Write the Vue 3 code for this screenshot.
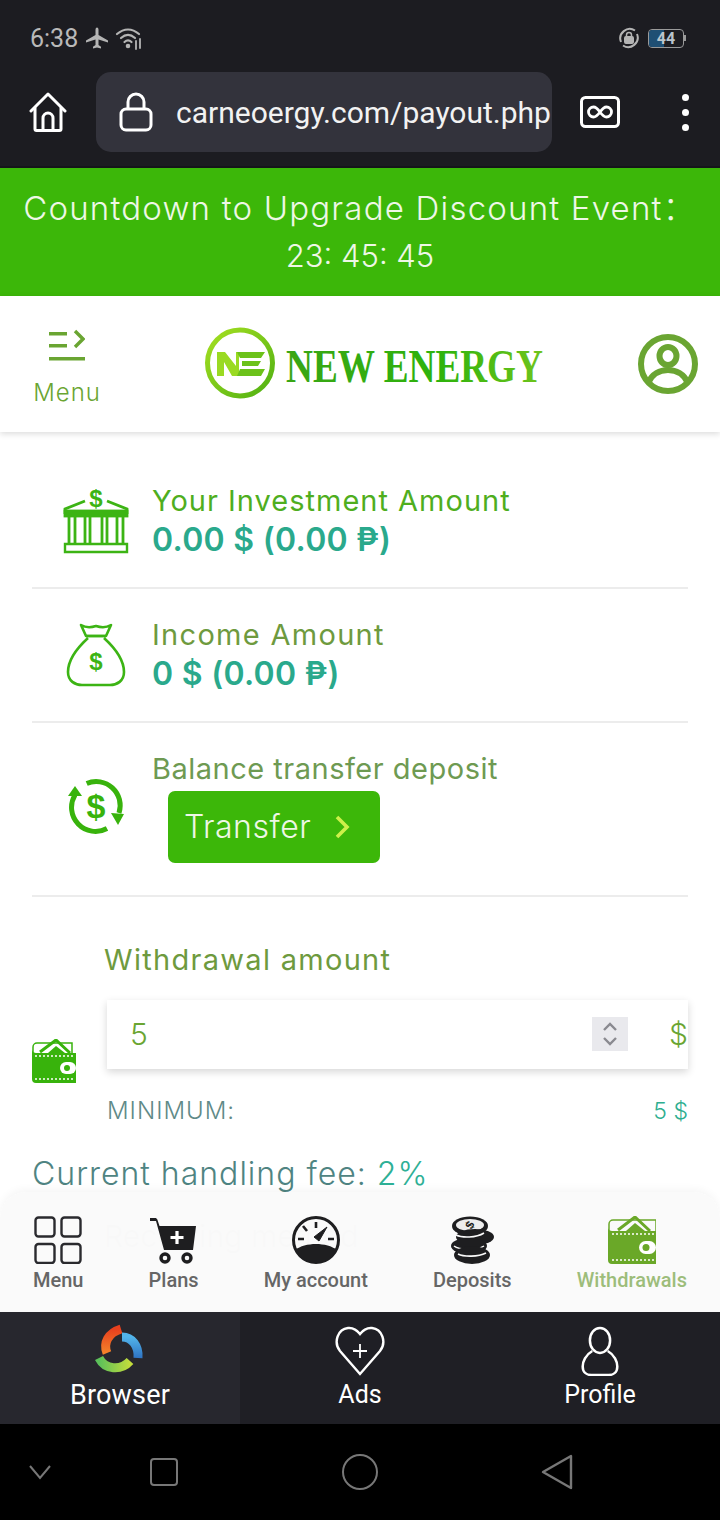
<script setup>
import { ref } from "vue"

const amount = ref(5)
const countdown = "23: 45: 45"
const url = "carneoergy.com/payout.php"
</script>

<template>
  <div class="phone">
    <div class="status-bar">
      <span class="clock">6:38</span>
      <svg class="st-plane" viewBox="0 0 24 24" width="24" height="24"><path d="M12 1.500c-1 0-1.500 1.200-1.500 2.500v5L1 14.500v2l9.500-3v5.500L8 20.800v1.700l4-1 4 1v-1.700l-2.500-1.800v-5.500l9.500 3v-2L13.500 9V4c0-1.300-.5-2.500-1.500-2.500z" fill="#b4b4b4"/></svg>
      <svg class="st-wifi" viewBox="0 0 30 24" width="30" height="24" fill="none" stroke="#b4b4b4" stroke-width="2.200" stroke-linecap="round"><path d="M2 8c7-6 15-6 22 0"/><path d="M6 12c4.500-4 9.500-4 14 0"/><path d="M9.500 16c2.500-2.200 4.500-2.200 7 0"/><circle cx="13" cy="20" r="1.200" fill="#b4b4b4"/><path d="M21 15v8M25 13v9" stroke-width="1.800"/></svg>
      <span class="st-fill"></span>
      <svg class="st-rotate" viewBox="0 0 24 24" width="24" height="24" fill="none" stroke="#b4b4b4" stroke-width="2"><path d="M4 16a9.500 9.500 0 0 1 14-11.500M20 8a9.500 9.500 0 0 1-14 11.500"/><rect x="8" y="11" width="8" height="6" rx="1" fill="#b4b4b4"/><path d="M9.500 11V9a2.500 2.500 0 0 1 5 0v2" stroke-width="1.500"/></svg>
      <span class="battery"><i class="battery-fill"></i><b>44</b></span>
      <span class="battery-tip"></span>
    </div>

    <div class="browser-bar">
      <svg class="home-icon" viewBox="0 0 38 40" width="38" height="40" fill="none" stroke="#fff" stroke-width="3" stroke-linejoin="round" stroke-linecap="round"><path d="M2 19L19 2l17 17"/><path d="M6 16v21a1.500 1.500 0 0 0 1.500 1.500h23A1.500 1.500 0 0 0 32 37V16"/><path d="M14 38V26a5 5 0 0 1 10 0v12"/></svg>
      <div class="url-box">
        <svg class="lock-icon" viewBox="0 0 34 40" width="34" height="40" fill="none" stroke="#fff" stroke-width="3"><rect x="2" y="17" width="30" height="21" rx="5"/><path d="M9 17V10a8 8 0 0 1 16 0v7"/></svg>
        <span class="url-text">{{ url }}</span>
      </div>
      <svg class="infinity-icon" viewBox="0 0 40 32" width="40" height="32" fill="none" stroke="#fff"><rect x="1.500" y="1.500" width="37" height="29" rx="4" stroke-width="3"/><path d="M20 16c-2.500-3.500-4.500-5-6.500-5a5 5 0 0 0 0 10c2 0 4-1.500 6.500-5s4.500-5 6.500-5a5 5 0 0 1 0 10c-2 0-4-1.500-6.500-5z" stroke-width="2.800"/></svg>
      <div class="dots"><i></i><i></i><i></i></div>
    </div>

    <div class="page-area">
      <div class="countdown">
        <div>Countdown to Upgrade Discount Event：</div>
        <div class="countdown-time">{{ countdown }}</div>
      </div>

      <header class="site-header">
        <div class="menu-btn">
          <svg viewBox="0 0 36 32" width="36" height="32" fill="#6aa532"><rect x="0" y="3" width="18" height="3.500"/><rect x="0" y="15" width="18" height="3.500"/><rect x="0" y="28" width="36" height="3.500"/><path d="M26 2l8 8-8 8" fill="none" stroke="#6aa532" stroke-width="3.400"/></svg>
          <span>Menu</span>
        </div>
        <svg class="logo" viewBox="0 0 340 76" width="340" height="76">
          <defs>
            <linearGradient id="ring" x1="0" y1="0" x2="1" y2="1"><stop offset="0" stop-color="#a6e021"/><stop offset="1" stop-color="#4fb012"/></linearGradient>
            <linearGradient id="word" x1="0" y1="0" x2="1" y2="0"><stop offset="0" stop-color="#39a515"/><stop offset=".6" stop-color="#2eb30c"/><stop offset="1" stop-color="#6fc41c"/></linearGradient>
          </defs>
          <ellipse cx="35" cy="37" rx="32.500" ry="33" fill="none" stroke="url(#ring)" stroke-width="5"/>
          <path d="M12 50V26h8l11 14V26h3v24h-7L19 36v14z" fill="#9ada22"/>
          <path d="M32 26h28l-4 6H35zM37 35h19l-3 5H37zM35 43h25l-4 7H32z" fill="#6cc21a"/>
          <text class="logo-text" x="81" y="56" textLength="257" lengthAdjust="spacingAndGlyphs" fill="url(#word)">NEW ENERGY</text>
        </svg>
        <svg class="user-icon" viewBox="0 0 60 60" width="60" height="60" fill="none" stroke="#6aa532" stroke-width="6"><circle cx="30" cy="30" r="27"/><ellipse cx="30" cy="22" rx="8.500" ry="9"/><path d="M10 49c4-9 12-13 20-13s16 4 20 13"/></svg>
      </header>

      <main class="content">
        <section class="row">
          <div class="row-icon">
            <svg class="bank-icon" viewBox="0 0 64 66" width="64" height="66" fill="none" stroke="#3cb414" stroke-width="2.800">
              <path d="M1 26v-5l20-8M63 26v-5l-20-8"/>
              <rect x="1" y="23" width="62" height="5" fill="#3cb414"/>
              <path d="M5 28v27M11 28v27M21 28v27M26 28v27M38 28v27M43 28v27M53 28v27M59 28v27"/>
              <path d="M1 56h62v8H1z" stroke-width="2.400"/>
              <text class="bank-dollar" x="32" y="19" text-anchor="middle" fill="#3cb414" stroke="none">$</text>
            </svg>
          </div>
          <div class="row-text">
            <div class="label label-bright">Your Investment Amount</div>
            <div class="value">0.00 $ (0.00 ₱)</div>
          </div>
        </section>

        <section class="row">
          <div class="row-icon">
            <svg viewBox="0 0 60 66" width="60" height="66" fill="none" stroke="#3cb414" stroke-width="2.600" stroke-linejoin="round">
              <path d="M15 3c5 3 9 3 15 1 6 2 10 2 15-1l-5 11H20z"/>
              <path d="M20 14h20M22 16C10 27 2 38 2 50c0 9 7 13 14 13h28c7 0 14-4 14-13 0-12-8-23-20-34"/>
              <text class="bag-dollar" x="30" y="48" text-anchor="middle" fill="#3cb414" stroke="none">$</text>
            </svg>
          </div>
          <div class="row-text">
            <div class="label label-wide">Income Amount</div>
            <div class="value">0 $ (0.00 ₱)</div>
          </div>
        </section>

        <section class="row row-transfer">
          <div class="row-icon">
            <svg viewBox="0 0 56 56" width="56" height="56" fill="none" stroke="#38b30c" stroke-width="5">
              <path d="M18.700 5.500A24 24 0 0 1 51 35"/>
              <path d="M39 50.500A24 24 0 0 1 7 17"/>
              <path d="M7 8l7 10H0z" fill="#38b30c" stroke="none"/>
              <path d="M50 47l-7-12 13 1z" fill="#38b30c" stroke="none"/>
              <text class="transfer-dollar" x="28" y="40" text-anchor="middle" fill="#38b30c" stroke="none">$</text>
            </svg>
          </div>
          <div class="row-text">
            <div class="label label-dim">Balance transfer deposit</div>
            <button class="transfer-btn">
              Transfer
              <svg viewBox="0 0 16 24" width="16" height="24" fill="none" stroke="#cdf04a" stroke-width="3.600"><path d="M3 2l10 10L3 22"/></svg>
            </button>
          </div>
        </section>

        <section class="withdraw">
          <div class="label label-wide withdraw-title">Withdrawal amount</div>
          <div class="withdraw-line">
            <svg class="wallet-small" viewBox="0 0 44 44" width="44" height="44">
              <path d="M1 8a4 4 0 0 1 4-4h35v12H1z" fill="#fff" stroke="#38b30c" stroke-width="1.500"/>
              <path d="M8 13L24 1l14 13" fill="none" stroke="#38b30c" stroke-width="3"/>
              <path d="M16 14L24 7l9 7z" fill="#38b30c"/>
              <path d="M0 10c0 3 2 4 5 4h39v30H4a4 4 0 0 1-4-4z" fill="#38b30c"/>
              <path d="M3 17h38M3 40h38" stroke="#fff" stroke-width="1.300" stroke-dasharray="2 2"/>
              <rect x="28" y="23" width="16" height="12" rx="6" fill="#fff"/>
              <circle cx="35" cy="29" r="3" fill="#38b30c"/>
            </svg>
            <div class="amount-box">
              <input v-model="amount" class="amount-input" type="text" readonly />
              <span class="spinner">
                <svg viewBox="0 0 36 34" width="36" height="34" fill="none" stroke="#8a8a90" stroke-width="2.400"><path d="M12 13l6-6 6 6M12 21l6 6 6-6"/></svg>
              </span>
              <span class="currency">$</span>
            </div>
          </div>
          <div class="minimum">
            <span class="minimum-label">MINIMUM:</span>
            <span class="minimum-value">5 $</span>
          </div>
        </section>

        <div class="fee">Current handling fee: <span>2%</span></div>
        <div class="ghost">Receiving method</div>
      </main>

      <nav class="page-nav">
        <div class="nav-item">
          <svg viewBox="0 0 48 48" width="48" height="48" fill="none" stroke="#2a2a2e" stroke-width="2.400"><rect x="1.500" y="1.500" width="19" height="19" rx="3"/><rect x="27.500" y="1.500" width="19" height="19" rx="3"/><rect x="1.500" y="28" width="19" height="19" rx="3"/><rect x="27.500" y="28" width="19" height="19" rx="3"/></svg>
          <span>Menu</span>
        </div>
        <div class="nav-item">
          <svg viewBox="0 0 48 48" width="48" height="48"><path d="M0 2h5c1 0 2 .5 2.500 2l2 6H46l-3 24H14L6 5H0z" fill="#1e1e20"/><circle cx="15" cy="42" r="4" fill="#fafafa" stroke="#1e1e20" stroke-width="3.400"/><circle cx="37" cy="42" r="4" fill="#fafafa" stroke="#1e1e20" stroke-width="3.400"/><path d="M27 15v13M20.500 21.500h13" stroke="#fff" stroke-width="3.200"/></svg>
          <span>Plans</span>
        </div>
        <div class="nav-item">
          <svg viewBox="0 0 48 48" width="48" height="48" fill="none" stroke="#1e1e20"><circle cx="24" cy="24" r="22.500" stroke-width="3"/><path d="M3 34c5-4 13-6 21-6s16 2 21 6c-4 8-12 13-21 13S7 42 3 34z" fill="#1e1e20" stroke="none"/><path d="M24 6v6M11 10l4 5M6 23h6M36 23h6" stroke-width="2.600"/><path d="M22 21l13-10-8 14z" fill="#1e1e20" stroke-width="1"/></svg>
          <span>My account</span>
        </div>
        <div class="nav-item">
          <svg viewBox="0 0 48 48" width="48" height="48" fill="#1e1e20"><ellipse cx="22" cy="10" rx="18" ry="9.500"/><ellipse cx="22" cy="9" rx="14" ry="6" fill="#eee"/><ellipse cx="27" cy="21" rx="19" ry="8"/><ellipse cx="21" cy="30" rx="18" ry="8"/><path d="M6 30c5 4 24 4 30 0" stroke="#fafafa" stroke-width="1.500" fill="none"/><ellipse cx="24" cy="39" rx="18" ry="9"/><path d="M10 38c6 3 20 3 28-1" stroke="#fafafa" stroke-width="1.600" fill="none"/><path d="M8 19c6 3 20 3 28-2" stroke="#fafafa" stroke-width="1.500" fill="none"/><text class="coin-dollar" x="22" y="13" text-anchor="middle" transform="rotate(-60 22 9)">$</text></svg>
          <span>Deposits</span>
        </div>
        <div class="nav-item nav-active">
          <svg viewBox="0 0 48 48" width="48" height="48">
            <path d="M1 8a4 4 0 0 1 4-4h43v12H1z" fill="#fafafa" stroke="#6aa828" stroke-width="1.500"/>
            <path d="M10 14L27 1l15 14" fill="none" stroke="#6aa828" stroke-width="3"/>
            <path d="M18 15L27 7l10 8z" fill="#6aa828"/>
            <path d="M0 11c0 3 2 4 5 4h43v33H4a4 4 0 0 1-4-4z" fill="#6aa828"/>
            <path d="M4 18h42M4 44h42" stroke="#fff" stroke-width="1.400" stroke-dasharray="2 2"/>
            <rect x="31" y="25" width="17" height="13" rx="6.500" fill="#fff"/>
            <circle cx="38" cy="31.500" r="3.500" fill="#6aa828"/>
          </svg>
          <span>Withdrawals</span>
        </div>
      </nav>
    </div>

    <div class="app-tabs">
      <div class="tab tab-on">
        <svg viewBox="0 0 50 54" width="50" height="54" fill="none" stroke-width="9">
          <defs>
            <linearGradient id="orange" x1="0" y1="0" x2="0" y2="1"><stop offset="0" stop-color="#e8401e"/><stop offset="1" stop-color="#f4822a"/></linearGradient>
            <linearGradient id="blue" x1="0" y1="0" x2="0" y2="1"><stop offset="0" stop-color="#52b4ea"/><stop offset="1" stop-color="#2f74c4"/></linearGradient>
            <linearGradient id="green" x1="0" y1="0" x2="1" y2="0"><stop offset="0" stop-color="#5cc05a"/><stop offset="1" stop-color="#c2dc3c"/></linearGradient>
          </defs>
          <path d="M12 31C8 21 13 11 26 7" stroke="url(#orange)"/>
          <path d="M27 15c10 0 17 9 16 21" stroke="url(#blue)"/>
          <path d="M4 36c6 12 22 13 31 3" stroke="url(#green)"/>
        </svg>
        <span class="tab-label-big">Browser</span>
      </div>
      <div class="tab">
        <svg viewBox="0 2 50 50" width="50" height="50" fill="none" stroke="#fff" stroke-width="2.400"><path d="M25 50L5 27C-2 18 3 5 13 4c5-.5 9 2 12 6 3-4 7-6.500 12-6 10 1 15 14 8 23z"/><path d="M25 20v14M18 27h14" stroke-width="1.800"/></svg>
        <span>Ads</span>
      </div>
      <div class="tab">
        <svg viewBox="0 0 50 52" width="50" height="50" fill="none" stroke="#fff" stroke-width="2.600"><ellipse cx="25" cy="15" rx="10.500" ry="13"/><path d="M17 26C10 30 7 37 7 42c0 6 4 9 9 9h18c5 0 9-3 9-9 0-5-3-12-10-16"/></svg>
        <span>Profile</span>
      </div>
    </div>

    <div class="system-nav">
      <svg class="sys-chev" viewBox="0 0 24 16" width="24" height="16" fill="none" stroke="#777" stroke-width="2"><path d="M2 2l10 12L22 2"/></svg>
      <span class="sys-square"></span>
      <span class="sys-circle"></span>
      <svg class="sys-back" viewBox="0 0 32 36" width="32" height="36" fill="none" stroke="#777" stroke-width="2.400" stroke-linejoin="round"><path d="M30 2v32L2 18z"/></svg>
    </div>
  </div>
</template>

<style scoped>
.phone {
  width: 720px;
  height: 1520px;
  display: flex;
  flex-direction: column;
  overflow: hidden;
  background: #fff;
  font-family: Inter, "Open Sans", sans-serif;
}

/* status + browser chrome */
.status-bar {
  height: 72px;
  padding: 4px 30px 0;
  box-sizing: border-box;
  background: #1c1c21;
  display: flex;
  align-items: center;
  flex-shrink: 0;
}
.clock {
  font-family: Roboto, sans-serif;
  font-size: 25px;
  color: #b9b9b9;
  margin-right: 7px;
}
.st-wifi {
  margin-left: 6px;
}
.st-fill {
  flex: 1;
}
.battery {
  position: relative;
  width: 36px;
  height: 19px;
  margin-left: 7px;
  border: 1px solid #9a9a9a;
  border-radius: 4px;
  box-sizing: border-box;
  overflow: hidden;
  display: flex;
  align-items: center;
  justify-content: center;
}
.battery-fill {
  position: absolute;
  left: 0;
  top: 0;
  bottom: 0;
  width: 44%;
  background: #1f4f74;
}
.battery b {
  position: relative;
  font-family: Roboto, sans-serif;
  font-size: 16px;
  color: #b9c4cc;
}
.battery-tip {
  width: 2px;
  height: 6px;
  background: #9a9a9a;
  margin-right: 4px;
}
.browser-bar {
  height: 96px;
  box-sizing: border-box;
  padding: 0 0 14px 29px;
  background: #1c1c21;
  display: flex;
  align-items: center;
  flex-shrink: 0;
  border-bottom: 2px solid #15151a;
}
.home-icon {
  flex-shrink: 0;
}
.url-box {
  width: 456px;
  height: 80px;
  margin-left: 29px;
  padding-left: 23px;
  box-sizing: border-box;
  border-radius: 15px;
  background: #33333c;
  display: flex;
  align-items: center;
  overflow: hidden;
  flex-shrink: 0;
}
.lock-icon {
  flex-shrink: 0;
}
.url-text {
  margin-left: 23px;
  font-family: Roboto, sans-serif;
  font-size: 30px;
  color: #f2f2f2;
  white-space: nowrap;
}
.infinity-icon {
  margin-left: 28px;
  flex-shrink: 0;
}
.dots {
  margin-left: 62px;
  display: flex;
  flex-direction: column;
  gap: 8px;
}
.dots i {
  display: block;
  width: 7px;
  height: 7px;
  border-radius: 50%;
  background: #fff;
}

/* web page */
.page-area {
  position: relative;
  flex: 1;
  min-height: 0;
  overflow: hidden;
  background: #fff;
}
.countdown {
  height: 128px;
  padding-top: 16px;
  box-sizing: border-box;
  background: #3cb709;
  color: #eef7e6;
  font-size: 33px;
  line-height: 48px;
  font-weight: 300;
  text-align: center;
  letter-spacing: 1.2px;
  font-family: Inter, "Noto Sans CJK SC", sans-serif;
  white-space: nowrap;
}
.countdown-time {
  font-size: 31px;
  letter-spacing: 0;
}
.site-header {
  position: relative;
  height: 136px;
  padding: 0 22px 0 33px;
  box-sizing: border-box;
  display: flex;
  align-items: center;
  background: #fff;
  box-shadow: 0 2px 6px rgba(0, 0, 0, 0.14);
}
.menu-btn {
  width: 68px;
  margin-top: 8px;
  display: flex;
  flex-direction: column;
  align-items: center;
  gap: 18px;
  color: #6aa532;
  font-size: 24px;
  line-height: 28px;
  font-weight: 300;
  letter-spacing: 0.9px;
}
.logo {
  margin-left: 104px;
  margin-top: -1px;
  overflow: visible;
}
.logo-text {
  font-family: "Liberation Serif", serif;
  font-size: 46px;
  font-weight: 700;
}
.user-icon {
  margin-left: auto;
}
.content {
  padding: 23px 32px 0;
}
.row {
  height: 134px;
  box-sizing: border-box;
  display: flex;
  align-items: center;
  border-bottom: 2px solid #ececec;
}
.row-icon {
  width: 120px;
  display: flex;
  justify-content: center;
  flex-shrink: 0;
  padding-left: 8px;
  box-sizing: border-box;
}
.bank-icon {
  overflow: visible;
}
.bank-dollar {
  font-family: "Liberation Sans", sans-serif;
  font-size: 24px;
  font-weight: 700;
}
.bag-dollar {
  font-family: "Liberation Sans", sans-serif;
  font-size: 24px;
  font-weight: 700;
}
.transfer-dollar {
  font-family: "Liberation Sans", sans-serif;
  font-size: 34px;
  font-weight: 700;
}
.coin-dollar {
  font-family: "Liberation Sans", sans-serif;
  font-size: 12px;
  font-weight: 700;
}
.label {
  font-size: 29px;
  line-height: 38px;
  color: #6e9a3e;
  letter-spacing: 1px;
  white-space: nowrap;
}
.label-wide {
  letter-spacing: 1.300px;
}
.label-bright {
  color: #4fae1e;
}
.label-dim {
  color: #6e9a52;
  letter-spacing: 0.5px;
}
.value {
  font-size: 32px;
  line-height: 40px;
  font-weight: 600;
  letter-spacing: 0.3px;
  color: #2aa98c;
  font-family: Inter, "Noto Sans", sans-serif;
}
.row-transfer {
  height: 174px;
  padding-bottom: 6px;
}
.transfer-btn {
  display: flex;
  align-items: center;
  gap: 23px;
  width: 212px;
  height: 72px;
  margin: 3px 0 0 16px;
  padding: 0 0 0 16px;
  border: none;
  border-radius: 7px;
  background: #3cb709;
  color: #eef7e6;
  font-family: Inter, sans-serif;
  font-size: 32px;
  font-weight: 300;
  letter-spacing: 0.5px;
}
.withdraw {
  padding-top: 44px;
}
.withdraw-title {
  margin-left: 72px;
}
.withdraw-line {
  display: flex;
  align-items: flex-end;
  margin-top: 21px;
}
.wallet-small {
  flex-shrink: 0;
  margin-bottom: -14px;
}
.amount-box {
  flex: 1;
  height: 69px;
  margin-left: 31px;
  background: #fff;
  box-shadow: 0 3px 8px rgba(0, 0, 0, 0.16);
  display: flex;
  align-items: center;
  padding-bottom: 2px;
  box-sizing: border-box;
}
.amount-input {
  flex: 1;
  min-width: 0;
  padding: 0 0 0 23px;
  border: none;
  outline: none;
  background: transparent;
  font-family: Inter, sans-serif;
  font-size: 30px;
  font-weight: 300;
  color: #6aa532;
}
.spinner {
  width: 36px;
  height: 34px;
  background: #e9e9ed;
  display: block;
}
.currency {
  width: 60px;
  text-align: right;
  font-size: 30px;
  font-weight: 300;
  color: #6aa532;
}
.minimum {
  display: flex;
  justify-content: space-between;
  align-items: center;
  margin: 28px 0 0 75px;
  font-size: 23px;
  line-height: 28px;
  font-weight: 300;
  color: #5f8a88;
}
.minimum-label {
  font-size: 24px;
  letter-spacing: 1px;
}
.minimum-value {
  color: #2eae8f;
}
.fee {
  margin-top: 29px;
  font-size: 32px;
  line-height: 40px;
  font-weight: 300;
  letter-spacing: 1px;
  color: #4f8482;
  white-space: nowrap;
}
.fee span {
  color: #2eb096;
}
.ghost {
  margin: 22px 0 0 72px;
  font-size: 30px;
  line-height: 40px;
  color: #aaa;
  white-space: nowrap;
}
.page-nav {
  position: absolute;
  left: 0;
  right: 0;
  bottom: 0;
  height: 120px;
  padding: 24px 33px 0;
  box-sizing: border-box;
  display: flex;
  justify-content: space-between;
  background: rgba(250, 250, 250, 0.98);
  border-radius: 26px 26px 0 0;
  box-shadow: 0 -3px 8px rgba(0, 0, 0, 0.04);
}
.nav-item {
  display: flex;
  flex-direction: column;
  align-items: center;
  gap: 2px;
  font-family: Roboto, sans-serif;
  font-size: 20px;
  line-height: 28px;
  font-weight: 500;
  color: #666;
  white-space: nowrap;
}
.nav-active {
  color: #9dbd7a;
}

/* app tabs + system nav */
.app-tabs {
  height: 112px;
  display: flex;
  flex-shrink: 0;
  background: #1f1f25;
}
.tab {
  flex: 1;
  display: flex;
  flex-direction: column;
  align-items: center;
  padding-top: 14px;
  box-sizing: border-box;
  color: #fff;
  font-family: Roboto, sans-serif;
  font-size: 25px;
  line-height: 34px;
}
.tab span {
  margin-top: 2px;
}
.tab-on {
  padding-top: 10px;
  background: #27272e;
}
.tab-label-big {
  font-size: 27px;
  letter-spacing: 0.2px;
}
.system-nav {
  position: relative;
  height: 96px;
  background: #000;
  display: flex;
  align-items: center;
  flex-shrink: 0;
  padding-left: 28px;
}
.sys-square {
  width: 28px;
  height: 28px;
  margin-left: 98px;
  border: 2px solid #777;
  border-radius: 4px;
  box-sizing: border-box;
}
.sys-circle {
  width: 36px;
  height: 36px;
  margin-left: 164px;
  border: 2px solid #777;
  border-radius: 50%;
  box-sizing: border-box;
}
.sys-back {
  margin-left: 163px;
}
</style>
